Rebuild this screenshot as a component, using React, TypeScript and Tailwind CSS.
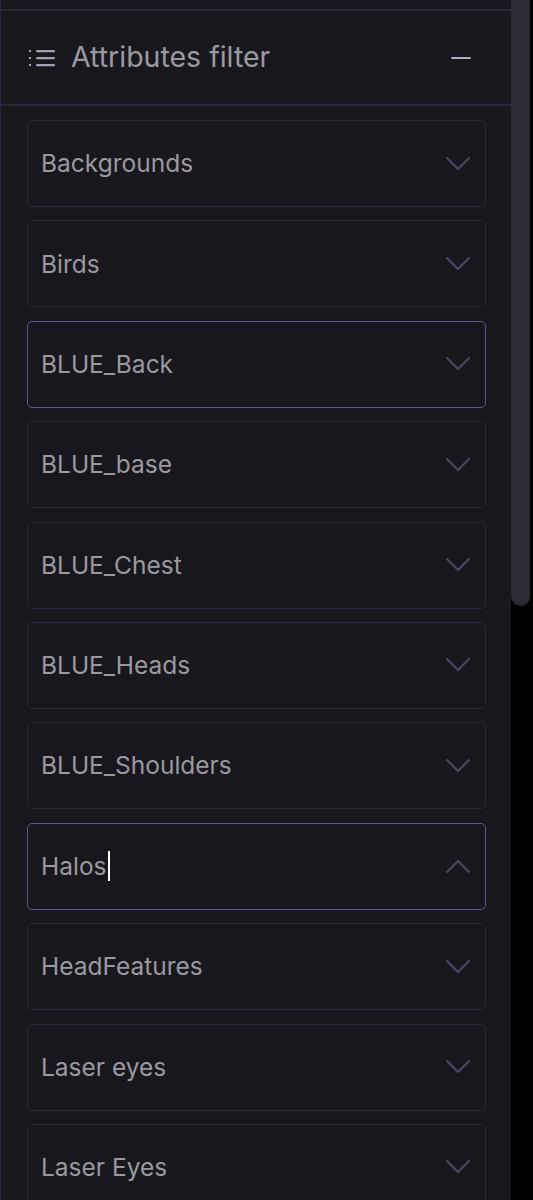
import React from "react";

const items = [
	"Backgrounds",
	"Birds",
	"BLUE_Back",
	"BLUE_base",
	"BLUE_Chest",
	"BLUE_Heads",
	"BLUE_Shoulders",
	"Halos",
	"HeadFeatures",
	"Laser eyes",
	"Laser Eyes",
];

function Chevron({ up }: { up?: boolean }) {
	return (
		<svg width="26" height="16" viewBox="0 0 26 16" fill="none" className="shrink-0">
			<polyline
				points={up ? "2,14 13,3 24,14" : "2,2 13,13 24,2"}
				stroke="#4e4560"
				strokeWidth="2.2"
				strokeLinecap="round"
				strokeLinejoin="round"
			/>
		</svg>
	);
}

export default function App() {
	return (
		<div className="flex w-[533px] h-[1200px] overflow-hidden bg-black font-['Inter','Noto_Sans',sans-serif]">
			<div className="w-[511px] shrink-0 bg-[#18171d] border-l border-[#2a2540]">
				<div className="h-[9px]" />
				<div className="border-y-2 border-[#2b2839] h-[97px] flex items-center justify-between pl-[27px] pr-[40px]">
					<div className="flex items-center gap-[15px]">
						<svg width="28" height="20" viewBox="0 0 28 20" fill="none">
							<rect x="1" y="2" width="2" height="2" fill="#a79fb6" />
							<rect x="1" y="9" width="2" height="2" fill="#a79fb6" />
							<rect x="1" y="16" width="2" height="2" fill="#a79fb6" />
							<rect x="8" y="2" width="19" height="2.2" rx="1" fill="#a79fb6" />
							<rect x="8" y="9" width="19" height="2.2" rx="1" fill="#a79fb6" />
							<rect x="8" y="16" width="19" height="2.2" rx="1" fill="#a79fb6" />
						</svg>
						<span className="text-[28.5px] leading-none text-[#9a99a0]">Attributes filter</span>
					</div>
					<div className="w-[20px] h-[2px] rounded-full bg-[#b3abc3]" />
				</div>
				<div className="flex flex-col gap-[13.4px] pt-[14px] pl-[26px] pr-[25px]">
					{items.map((item) => {
						const active = item === "BLUE_Back" || item === "Halos";
						return (
							<div
								key={item}
								className={`h-[87px] shrink-0 rounded-[5px] border flex items-center justify-between pl-[13px] pr-[14px] ${
									active ? "border-[#5e5590]" : "border-[#2b283b]"
								}`}
							>
								<span className="text-[24.5px] text-[#9a999f] flex items-center">
									{item}
									{item === "Halos" && (
										<span className="inline-block w-[2px] h-[30px] bg-white ml-[1px]" />
									)}
								</span>
								<Chevron up={item === "Halos"} />
							</div>
						);
					})}
				</div>
			</div>
			<div className="w-[22px] shrink-0 bg-black">
				<div className="w-[19px] h-[606px] bg-[#2c2b35] rounded-b-full" />
			</div>
		</div>
	);
}
